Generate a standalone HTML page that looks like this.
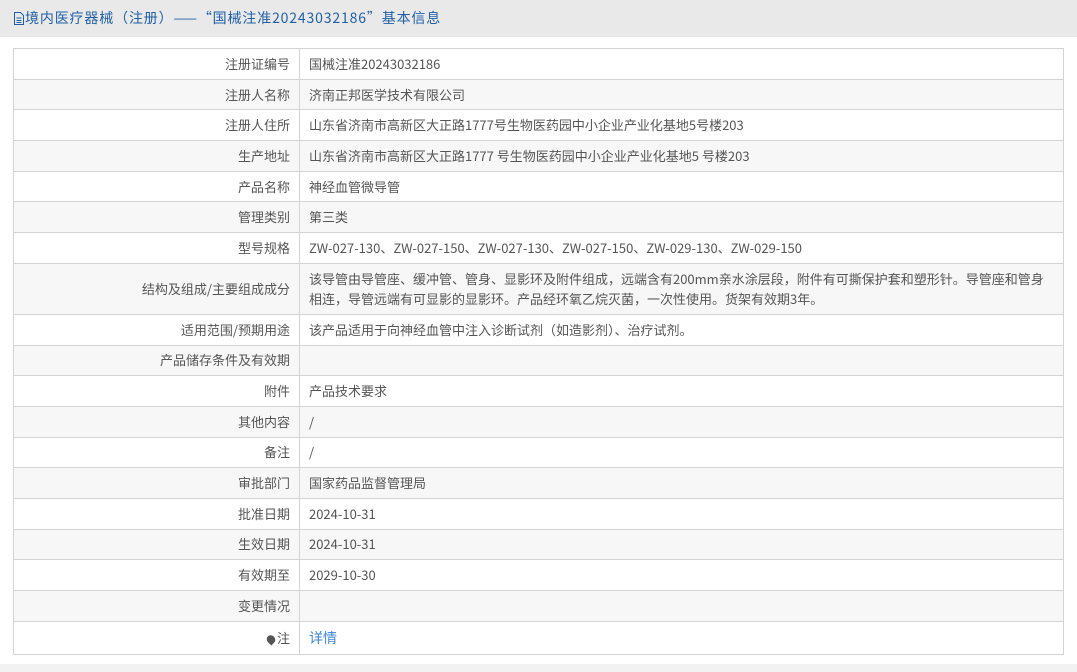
<!DOCTYPE html>
<html><head><meta charset="utf-8"><style>
*{margin:0;padding:0;box-sizing:border-box}
body{width:1077px;height:672px;background:#fff;font-family:"Noto Sans CJK SC","Liberation Sans",sans-serif;font-size:13px;color:#555;position:relative;overflow:hidden}
.hd{height:37px;background:#e9e9e9;color:#1f5fa8;font-size:14px;line-height:37px;padding-left:13px;white-space:nowrap;letter-spacing:0.85px}
.hd svg{vertical-align:-2px}
table{position:absolute;left:13px;top:48px;width:1051px;border-collapse:collapse;border:1px solid #ccc}
td{border:1px solid #d4d4d4;height:30.7px;padding:0 9px;line-height:20px;white-space:nowrap}
td.w{white-space:normal}
td.l{width:286px;text-align:right}
tr:nth-child(even) td{background:#f7f7f7}
.ft{position:absolute;left:0;top:664px;width:1077px;height:8px;background:#f2f2f2}
a{color:#3a87d8;text-decoration:none;font-size:14px}
</style></head><body>
<div class="hd"><svg width="12" height="13" viewBox="0 0 12 13"><path d="M1.5 .5h6l3 3v9h-9z" fill="none" stroke="#1f5fa8"/><path d="M3.5 6h5M3.5 8.5h5M3.5 10.5h5" stroke="#1f5fa8"/></svg>境内医疗器械（注册）——“国械注准20243032186”基本信息</div>
<table>
<tr><td class="l">注册证编号</td><td>国械注准20243032186</td></tr>
<tr><td class="l">注册人名称</td><td>济南正邦医学技术有限公司</td></tr>
<tr><td class="l">注册人住所</td><td>山东省济南市高新区大正路1777号生物医药园中小企业产业化基地5号楼203</td></tr>
<tr><td class="l">生产地址</td><td>山东省济南市高新区大正路1777 号生物医药园中小企业产业化基地5 号楼203</td></tr>
<tr><td class="l">产品名称</td><td>神经血管微导管</td></tr>
<tr><td class="l">管理类别</td><td>第三类</td></tr>
<tr><td class="l">型号规格</td><td>ZW-027-130、ZW-027-150、ZW-027-130、ZW-027-150、ZW-029-130、ZW-029-150</td></tr>
<tr><td class="l" style="height:51px">结构及组成/主要组成成分</td><td class="w">该导管由导管座、缓冲管、管身、显影环及附件组成，远端含有200mm亲水涂层段，附件有可撕保护套和塑形针。导管座和管身相连，导管远端有可显影的显影环。产品经环氧乙烷灭菌，一次性使用。货架有效期3年。</td></tr>
<tr><td class="l">适用范围/预期用途</td><td>该产品适用于向神经血管中注入诊断试剂（如造影剂）、治疗试剂。</td></tr>
<tr><td class="l">产品储存条件及有效期</td><td></td></tr>
<tr><td class="l">附件</td><td>产品技术要求</td></tr>
<tr><td class="l">其他内容</td><td>/</td></tr>
<tr><td class="l">备注</td><td>/</td></tr>
<tr><td class="l">审批部门</td><td>国家药品监督管理局</td></tr>
<tr><td class="l">批准日期</td><td>2024-10-31</td></tr>
<tr><td class="l">生效日期</td><td>2024-10-31</td></tr>
<tr><td class="l">有效期至</td><td>2029-10-30</td></tr>
<tr><td class="l">变更情况</td><td></td></tr>
<tr><td class="l" style="height:33px"><span style="display:inline-block;width:8px;height:9px;background:#555;border-radius:50% 50% 50% 0;transform:rotate(-45deg);margin-right:2px;vertical-align:-1px"></span>注</td><td><a>详情</a></td></tr>
</table>
<div class="ft"></div>
</body></html>
